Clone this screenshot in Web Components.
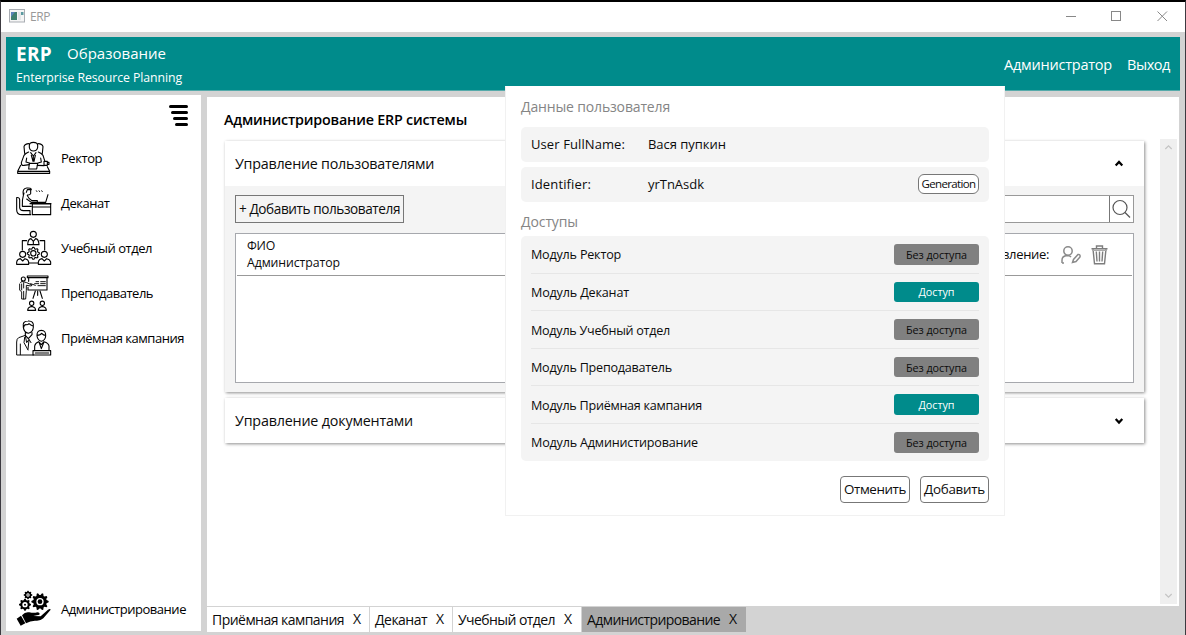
<!DOCTYPE html>
<html lang="ru">
<head>
<meta charset="utf-8">
<title>ERP</title>
<style>
  html, body { margin: 0; height: 100%; overflow: hidden; background: #d3d3d3; }
  body { font-family: "Open Sans", "Noto Sans", sans-serif; color: #0c0c0c; }
</style>
</head>
<body>
<erp-window></erp-window>
<script>
const define = (name, html, setup) => customElements.define(name, class extends HTMLElement {
  constructor() {
    super();
    this.attachShadow({ mode: 'open' }).innerHTML = typeof html === 'function' ? html(this) : html;
  }
  connectedCallback() { if (setup) setup(this); }
});

const gear = (cx, cy, r, hole, teeth) => {
  let d = '';
  for (let i = 0; i < teeth * 4; i++) {
    const a = (i - 0.5) * Math.PI * 2 / (teeth * 4);
    const rr = (i % 4 < 2) ? r : r * 0.78;
    d += (i ? 'L' : 'M') + (cx + rr * Math.cos(a)).toFixed(1) + ' ' + (cy + rr * Math.sin(a)).toFixed(1);
  }
  return d + 'Z' + `M${cx - hole} ${cy}a${hole} ${hole} 0 1 0 ${hole * 2} 0a${hole} ${hole} 0 1 0 ${-hole * 2} 0Z`;
};

const ICONS = {
  rector: ['48 30 108 108', `<path d="M74 70L72 50Q74 42 87 41M127 70L129 50Q127 42 114 41"/>
    <path d="M88 46Q88 37 100 37Q113 37 113 46V52Q111 63 100 63Q90 63 88 52Z"/>
    <path d="M86 66Q76 70 72 76L64 98Q64 108 72 106L88 104M115 66Q125 70 129 76L134 92M132 107L112 106M80 84L78 96L88 99M122 84L124 96L114 99"/>
    <path d="M92 68L100 78L108 68M94 76L99 94M106 76L102 94M100 78V92"/>
    <path d="M88 100H113L110 117H86ZM132 94h10v12h-10zM142 97h5v6h-5M62 106L53 124H149L142 110M53 124V130H149V124"/>`],
  dean: ['48 170 108 108', `<path d="M50 208V244Q50 259 66 259H92M50 208Q58 206 59 214V238Q60 247 70 247H90V259"/>
    <path d="M70 200Q66 180 80 179Q94 178 94 184H82Q80 188 79 192M92 186V196Q90 201 82 200M72 194L70 202M70 202Q66 214 67 234H94M82 202Q86 212 96 217H112V222H94L80 212"/>
    <path d="M97 227H152V259H97ZM90 226H153M97 236H152M112 222H137L144 199"/><path d="M109 187l2 3M117 187l2 3M125 187l2 3" stroke-width="2.6"/>`],
  study: ['48 -30 108 108', `<circle cx="100" cy="-17" r="9"/><path d="M83 14Q84 -3 93 -4L100 4L107 -4Q116 -3 117 14ZM100 4V12M80 2H67V30M120 2H134V30M86 69H114"/>
    <path d="${gear(100, 40, 18, 8, 8)}"/><circle cx="68" cy="43" r="9"/><path d="M50 73V66Q52 57 61 56L68 63L75 56Q85 58 86 66V73Z"/>
    <circle cx="133" cy="43" r="9"/><path d="M115 73V66Q117 57 126 56L133 63L140 56Q150 58 152 66V73Z"/>`],
  teacher: ['48 105 108 108', `<path d="M82 108H144V113H82ZM86 113V124M141 113V150H84V142"/><path d="M92 131L106 136M108 125H116M122 125H136M104 131H116M122 131H136M114 137H136" stroke-width="2.8"/>
    <circle cx="70" cy="117" r="6"/><path d="M62 128Q60 124 70 125L80 128L96 135L94 138L79 136V152L77 177H65V156L59 150V132M71 128V144M71 154V177M65 132V150" stroke-width="2.8"/><path d="M106 153L99 175M113 153V166M120 153L127 175"/>
    <circle cx="95" cy="190" r="6.5"/><path d="M83 211Q83 202 92 200H98Q107 202 107 211Z"/><circle cx="127" cy="190" r="6.5"/><path d="M115 211Q115 202 124 200H130Q139 202 139 211Z"/>`],
  admission: ['48 240 108 108', `<path d="M70 262Q66 243 84 243Q103 242 100 262Q99 277 85 280Q72 277 70 262ZM71 262Q72 254 78 254Q84 255 87 251Q92 256 99 258M76 278V286L85 296L96 284V278"/>
    <path d="M76 286L56 293Q50 296 50 306V345H100M61 312V344M76 288L80 308L87 298L93 308M87 300L84 328M74 292L72 308L84 330" stroke-width="2.9"/>
    <path d="M111 288Q110 271 124 271Q138 271 137 288Q136 301 124 304Q113 301 111 288ZM111 286Q122 286 125 280Q130 286 137 286M104 330V318Q106 308 116 305L124 314L132 305Q146 309 147 318V330M117 306L124 326L132 306"/>
    <path d="M99 332H152V345H99ZM106 339H146"/>`],
  admin: ['48 60 108 108', `<g fill="currentColor" fill-rule="evenodd" stroke="none"><path d="${gear(84, 75, 13, 5, 8)}"/><path d="${gear(75, 104, 18, 8, 8)}"/><path d="${gear(120, 95, 26, 11, 10)}"/><circle cx="120" cy="95" r="7"/><circle cx="84" cy="75" r="2"/><circle cx="75" cy="104" r="3"/>
    <path d="M50 146L63 137L76 160L62 167ZM66 136Q76 124 88 127Q102 130 112 127Q121 128 118 134L100 138L122 139L144 119Q151 115 152 119L130 145Q122 153 108 152Q92 151 78 160Z"/></g>`]
};

/* Line icon, stroke-based, 36px box. */
define('erp-icon', el => {
  const [box, body] = ICONS[el.getAttribute('name')] || ['0 0 1 1', ''];
  return `<style>:host{display:block;width:36px;height:36px;flex:none}svg{display:block}</style>
  <svg width="36" height="36" viewBox="${box}" fill="none" stroke="currentColor" stroke-width="3.3" stroke-linejoin="round" stroke-linecap="round">${body}</svg>`;
});

define('menu-item', el => `<style>
  :host{display:flex;align-items:center;height:45px;gap:9px;color:#000}
  .t{padding-top:var(--text-drop,2px)}
  </style><erp-icon name="${el.getAttribute('icon')}"></erp-icon><div class="t"><slot></slot></div>`);

define('side-bar', `<style>
  :host{display:flex;flex-direction:column;width:195px;background:#fff;box-sizing:border-box;padding:9px 0 0 10px;height:536px;margin-top:4px}
  .burger{display:flex;flex-direction:column;align-items:flex-end;gap:3px;padding:1px 13px 0 0;height:31px;box-sizing:border-box}
  .burger i{display:block;height:3px;border-radius:1.5px;background:#000}
  .grow{flex:1}
  .last{margin-bottom:1px;--text-drop:3px}
  </style>
  <div class="burger"><i style="width:19px"></i><i style="width:17px"></i><i style="width:15px"></i><i style="width:13px"></i></div>
  <menu-item icon="rector"><ui-text size="13" w="41">Ректор</ui-text></menu-item>
  <menu-item icon="dean"><ui-text size="13" w="48.5">Деканат</ui-text></menu-item>
  <menu-item icon="study"><ui-text size="13" w="91">Учебный отдел</ui-text></menu-item>
  <menu-item icon="teacher"><ui-text size="13" w="92">Преподаватель</ui-text></menu-item>
  <menu-item icon="admission"><ui-text size="13" w="123">Приёмная кампания</ui-text></menu-item>
  <div class="grow"></div>
  <menu-item class="last" icon="admin"><ui-text size="13" w="125">Администрирование</ui-text></menu-item>`);

define('title-bar', `<style>
  :host{display:flex;align-items:center;height:30px;background:#fff;padding:0 17px 0 8px;color:#999}
  svg{display:block} .app{margin:0 5px 2px 0} .grow{flex:1} .ctl{display:flex;gap:35px;align-items:center;margin-bottom:1px}
  </style>
  <svg class="app" width="16" height="14" viewBox="0 0 16 14"><rect x=".5" y=".5" width="15" height="12.5" fill="#f5f5f5" stroke="#a9adb3"/><rect x="2" y="3" width="6" height="8" fill="#3f7f6f"/><path d="M2 3h4l-4 5z" fill="#5a83b8"/><rect x="9" y="3" width="3" height="8" fill="#e3e6e8"/><rect x="12" y="3" width="2.5" height="3" fill="#5c9aa0"/></svg>
  <ui-text size="12" w="20">ERP</ui-text><div class="grow"></div>
  <div class="ctl"><svg width="11" height="11"><path d="M1 5.5h10" stroke="#888"/></svg>
  <svg width="11" height="11"><rect x=".5" y=".5" width="9" height="9" fill="none" stroke="#888"/></svg>
  <svg width="11" height="11"><path d="M.5 .5l9.5 9.5M10 .5l-9.5 9.5" stroke="#888"/></svg></div>`);

define('app-header', `<style>
  :host{display:flex;justify-content:space-between;background:#008b8b;border-bottom:1px solid #55aaaa;color:#fff;box-sizing:border-box;height:54px;padding:0 10px}
  .brand{display:flex;flex-direction:column}
  .top{display:flex;gap:15px;height:32px;align-items:center;padding-top:1px;box-sizing:border-box}
  .logo{padding-top:2px}
  .sub{height:17px;display:flex;align-items:center}
  .nav{display:flex;gap:15px;align-items:center;padding-top:4px}
  </style>
  <div class="brand"><div class="top"><ui-text class="logo" size="19" weight="700" w="36">ERP</ui-text><ui-text size="15" w="99">Образование</ui-text></div>
  <div class="sub"><ui-text size="12.3" w="166">Enterprise Resource Planning</ui-text></div></div>
  <div class="nav"><ui-text size="14.5" w="108">Администратор</ui-text><ui-text size="14.5" w="43">Выход</ui-text></div>`);

define('expander-card', el => `<style>
  :host{display:block;background:#f4f4f4;box-shadow:1px 1px 3px rgba(0,0,0,.45)}
  .head{display:flex;align-items:center;justify-content:space-between;height:45px;background:#fff;padding:0 20px 0 10px}
  .t{padding-top:2px}
  svg{display:block}
  </style>
  <div class="head"><div class="t"><slot name="title"></slot></div><svg width="10" height="8" viewBox="0 0 10 8"><path d="${el.hasAttribute('open') ? 'M1.7 5.5L5 1.9L8.3 5.5' : 'M1.7 2L5 5.6L8.3 2'}" fill="none" stroke="#000" stroke-width="2.2"/></svg></div>
  <slot></slot>`);

define('user-admin', `<style>
  :host{display:block;box-sizing:border-box;height:206px;padding:9px 10px 10px 10px}
  .bar{display:flex;justify-content:space-between;height:28px}
  .add{display:flex;align-items:center;justify-content:center;width:169px;box-sizing:border-box;border:1px solid #777}
  .search{display:flex;width:330px;box-sizing:border-box;border:1px solid #999;background:#fff}
  .search div{flex:1}.search svg{border-left:1px solid #777;display:block}
  .list{box-sizing:border-box;height:150px;margin-top:10px;border:1px solid #a6a8ad;background:#fff;padding:0 1px}
  .row{display:flex;justify-content:space-between;align-items:center;border-bottom:1px solid #999;height:41px;padding:0 24px 0 10px}
  .who{display:flex;flex-direction:column;padding-top:1px}.who>*{height:17px}
  .act{display:flex;align-items:center}
  .act svg{display:block}
  </style>
  <div class="bar"><div class="add"><ui-text size="13.6" w="161">+ Добавить пользователя</ui-text></div>
  <div class="search"><div></div><svg width="23" height="26" viewBox="0 0 23 26" fill="none" stroke="#555" stroke-width="1.2"><circle cx="10" cy="11.5" r="7"/><path d="M15 16.5L20 21.5"/></svg></div></div>
  <div class="list"><div class="row"><div class="who"><ui-text size="12.3" w="28">ФИО</ui-text><ui-text size="12.3" w="93">Администратор</ui-text></div>
  <div class="act"><ui-text size="13" w="77">Управление:</ui-text>
  <svg style="margin-left:11px" width="22" height="20" viewBox="0 0 22 20" fill="none" stroke="#8a8a8a" stroke-width="1.5"><circle cx="8" cy="6" r="4.2"/><path d="M2 18V15Q2 11 7 10.5Q10 10.5 11 12M2 18H4M12.5 17.5L13.5 14.5L18 9.5Q20.5 9 20 12L16 16.5Z"/></svg>
  <svg style="margin-left:9px" width="17" height="20" viewBox="0 0 17 20" fill="none" stroke="#7d7d7d" stroke-width="1.4"><path d="M.5 3.7H16.5M5.5 3V1H11.5V3M2 4L3.5 18.7H13.5L15 4M5.3 6.5L6 16.5M8.5 6.5V16.5M11.7 6.5L11 16.5"/><path d="M1 5.3H16" stroke="#aaa"/></svg></div></div></div>`);

define('scroll-rail', `<style>:host{display:flex;flex-direction:column;justify-content:space-between;align-items:center;width:17px;background:#efefef;box-sizing:border-box;padding:5px 0 5px}</style>
  <svg width="9" height="7"><path d="M1.3 5L4.5 1.8L7.7 5" fill="none" stroke="#c4c4c4" stroke-width="1.2"/></svg>
  <svg width="9" height="7"><path d="M1.3 2L4.5 5.2L7.7 2" fill="none" stroke="#c4c4c4" stroke-width="1.2"/></svg>`);

define('page-view', `<style>
  :host{display:flex;flex-direction:column;height:509px;background:#fff}
  .h{display:flex;align-items:center;height:42px;padding:5px 0 0 17px;box-sizing:border-box;color:#000}
  .body{display:flex;justify-content:space-between;height:465px;padding:0 2px 0 18px}
  .cards{width:919px;padding-top:2px;display:flex;flex-direction:column;gap:6px}
  </style>
  <div class="h"><ui-text size="14.3" weight="600" w="243">Администрирование ERP системы</ui-text></div>
  <div class="body"><div class="cards">
    <expander-card open><ui-text slot="title" size="14.3" w="199">Управление пользователями</ui-text><user-admin></user-admin></expander-card>
    <expander-card><ui-text slot="title" size="14.3" w="178">Управление документами</ui-text></expander-card>
  </div><scroll-rail></scroll-rail></div>`);

define('tab-item', `<style>
  :host{display:flex;align-items:center;gap:9px;height:25px;background:#fff;padding:1px 8px 0 5px;box-sizing:border-box}
  :host([active]){background:#a9a9a9}
  .x{padding-bottom:1px}</style><slot></slot><ui-text class="x" size="14" w="8.5">X</ui-text>`);

define('tab-strip', `<style>:host{display:flex;gap:1px;padding-top:1px}</style>
  <tab-item style="width:162px"><ui-text size="14" w="132">Приёмная кампания</ui-text></tab-item>
  <tab-item style="width:82px"><ui-text size="14" w="52">Деканат</ui-text></tab-item>
  <tab-item style="width:128px"><ui-text size="14" w="97">Учебный отдел</ui-text></tab-item>
  <tab-item style="width:164px" active><ui-text size="14" w="133">Администрирование</ui-text></tab-item>`);

define('field-row', `<style>
  :host{display:flex;align-items:center;height:34.5px;background:#f4f4f4;border-radius:5px;padding:0 10px;margin-bottom:5.5px}
  .l{width:117px}.g{flex:1}</style><div class="l"><slot name="label"></slot></div><slot></slot><div class="g"></div><slot name="action"></slot>`);

define('erp-button', `<style>
  :host{display:flex;align-items:center;justify-content:center;box-sizing:border-box;background:#fff;border:1px solid #777;border-radius:4px;height:27px;padding-top:1px}
  :host([small]){height:20px;width:61px;border-radius:6px;padding-top:0}</style><slot></slot>`);

define('access-row', el => {
  const on = el.hasAttribute('granted');
  return `<style>
  :host{display:flex;align-items:center;justify-content:space-between;height:37.6px;box-sizing:border-box;border-bottom:1px solid #e6e6e6}
  :host(:last-child){border-bottom-color:transparent}
  .t{padding-top:2.4px}
  .b{display:flex;align-items:center;justify-content:center;width:85px;height:20.5px;box-sizing:border-box;padding-top:1px;border-radius:3px;background:${on ? '#008b8b' : '#808080'};color:${on ? '#fff' : '#0c0c0c'}}
  </style><div class="t"><slot></slot></div><div class="b">${on ? '<ui-text size="10.8" w="36">Доступ</ui-text>' : '<ui-text size="10.8" w="61">Без доступа</ui-text>'}</div>`;
});

define('user-dialog', `<style>
  :host{display:block;box-sizing:border-box;width:500px;height:430px;background:#fff;border:1px solid #f1f1f1;border-top-color:#fff;padding:0 15px}
  .h{display:flex;align-items:center;height:40px;color:#858585;box-sizing:border-box}
  .h2{height:29px;padding-top:2px}
  .list{background:#f4f4f4;border-radius:5px;padding:0 10px;height:225px}
  .foot{display:flex;justify-content:flex-end;gap:10px;padding-top:14.5px}
  </style>
  <div class="h"><ui-text size="14" w="149">Данные пользователя</ui-text></div>
  <field-row><ui-text slot="label" size="13" w="94">User FullName:</ui-text><ui-text size="13" w="78">Вася пупкин</ui-text></field-row>
  <field-row><ui-text slot="label" size="13" w="60">Identifier:</ui-text><ui-text size="13" w="56">yrTnAsdk</ui-text><erp-button slot="action" small><ui-text size="11.5" w="54">Generation</ui-text></erp-button></field-row>
  <div class="h h2"><ui-text size="14" w="57">Доступы</ui-text></div>
  <div class="list">
    <access-row><ui-text size="12.6" w="90">Модуль Ректор</ui-text></access-row>
    <access-row granted><ui-text size="12.6" w="98">Модуль Деканат</ui-text></access-row>
    <access-row><ui-text size="12.6" w="139">Модуль Учебный отдел</ui-text></access-row>
    <access-row><ui-text size="12.6" w="141">Модуль Преподаватель</ui-text></access-row>
    <access-row granted><ui-text size="12.6" w="171">Модуль Приёмная кампания</ui-text></access-row>
    <access-row><ui-text size="12.6" w="167">Модуль Администирование</ui-text></access-row>
  </div>
  <div class="foot"><erp-button style="width:70px"><ui-text size="13.4" w="62">Отменить</ui-text></erp-button><erp-button style="width:69px"><ui-text size="13.4" w="61">Добавить</ui-text></erp-button></div>`);

define('erp-window', `<style>
  :host{display:block;position:relative;box-sizing:border-box;width:1186px;height:635px;border:solid #000;border-width:2px 1px 0;border-left-color:#3c3a40;border-right-color:#3c3a40;background:#d3d3d3}
  .pad{padding:5px 5px 0}
  .main{display:flex;gap:6px}
  .right{width:972px;padding-top:6px}
  user-dialog{position:absolute;left:504px;top:84px}
  </style>
  <title-bar></title-bar>
  <div class="pad"><app-header></app-header><div class="main"><side-bar></side-bar><div class="right"><page-view></page-view><tab-strip></tab-strip></div></div></div>
  <user-dialog></user-dialog>`);

/* Single-line label; "w" is its advance width, reached by adjusting the tracking. */
define('ui-text', el => `<style>
  :host{display:block;white-space:nowrap;flex:none;line-height:1.3;font-size:${el.getAttribute('size')}px;font-weight:${el.getAttribute('weight') || 400};width:${el.getAttribute('w')}px}
  span{display:inline-block}
  </style><span><slot></slot></span>`, el => {
  const span = el.shadowRoot.querySelector('span');
  span.style.letterSpacing = '0px';
  const n = el.textContent.length;
  const natural = span.getBoundingClientRect().width;
  const gap = (Number(el.getAttribute('w')) - natural) / n;
  span.style.letterSpacing = gap.toFixed(3) + 'px';
});
</script>
</body>
</html>
